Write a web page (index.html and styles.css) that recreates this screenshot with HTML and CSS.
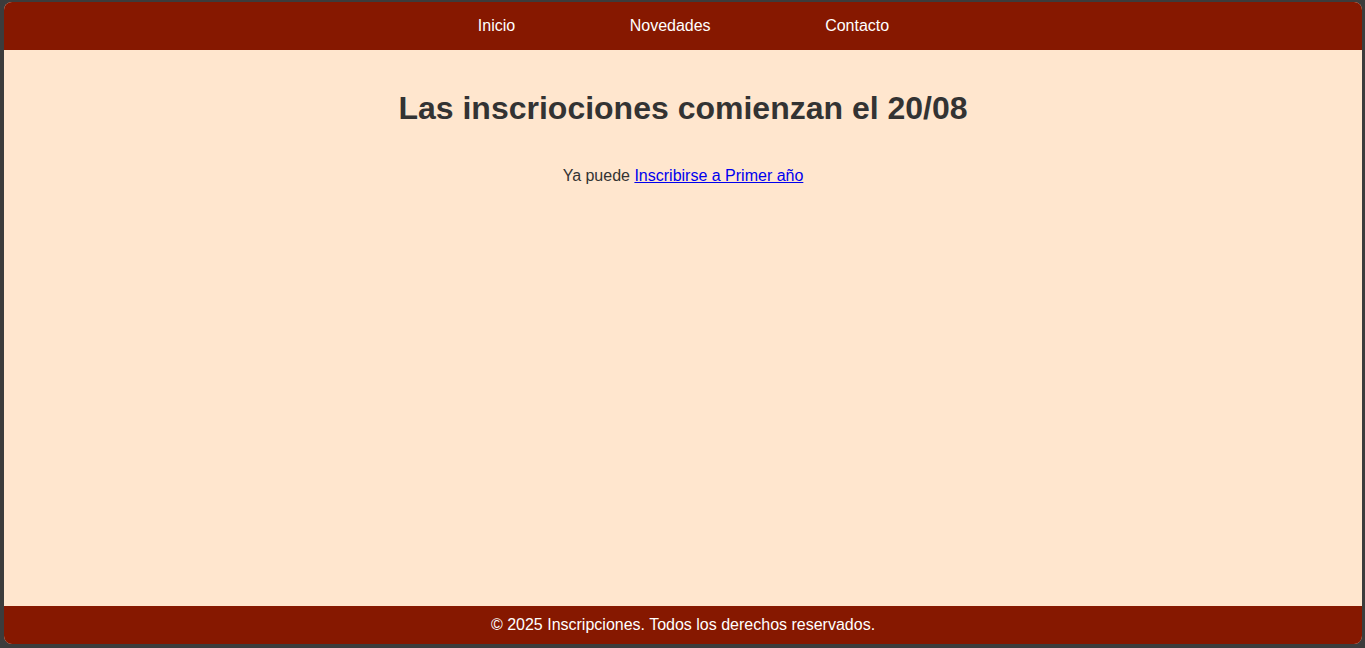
FILE: index.html
```html
<!DOCTYPE html>
<html lang="es">
<head>
<meta charset="utf-8">
<title>Inscripciones</title>
<link rel="stylesheet" href="styles.css">
</head>
<body>
<div class="frame">
  <header class="topbar">
    <nav class="nav">
      <a href="#">Inicio</a>
      <a href="#">Novedades</a>
      <a href="#">Contacto</a>
    </nav>
  </header>
  <main class="content">
    <h1 class="title">Las inscriociones comienzan el 20/08</h1>
    <p class="lead">Ya puede <a href="#" class="link">Inscribirse a Primer año</a></p>
  </main>
  <footer class="footer">© 2025 Inscripciones. Todos los derechos reservados.</footer>
</div>
</body>
</html>
```
FILE: styles.css
```css
html, body {
  margin: 0;
  height: 100%;
}
body {
  background: #3c3c3c;
  padding: 2px 3px 4px 4px;
  box-sizing: border-box;
  font-family: "Liberation Sans", Arial, sans-serif;
  font-size: 16px;
}
.frame {
  height: 100%;
  display: flex;
  flex-direction: column;
  border-radius: 8px;
  overflow: hidden;
  background: #ffe6ce;
}
.topbar {
  background: #861800;
  padding: 15px 0;
}
.nav {
  display: flex;
  justify-content: center;
  gap: 114.5px;
  padding-left: 1px;
}
.nav a {
  color: #fff;
  text-decoration: none;
  line-height: 18px;
}
.content {
  flex: 1;
  text-align: center;
  color: #333;
  padding: 40px 20px 0;
}
.title {
  margin: 0 0 40px;
  font-size: 32px;
  font-weight: bold;
  line-height: 37px;
}
.lead {
  margin: 0;
  line-height: 18px;
}
.link {
  color: #0000ee;
}
.footer {
  background: #861800;
  color: #fff;
  text-align: center;
  padding: 10px 0;
  line-height: 18px;
}
```
